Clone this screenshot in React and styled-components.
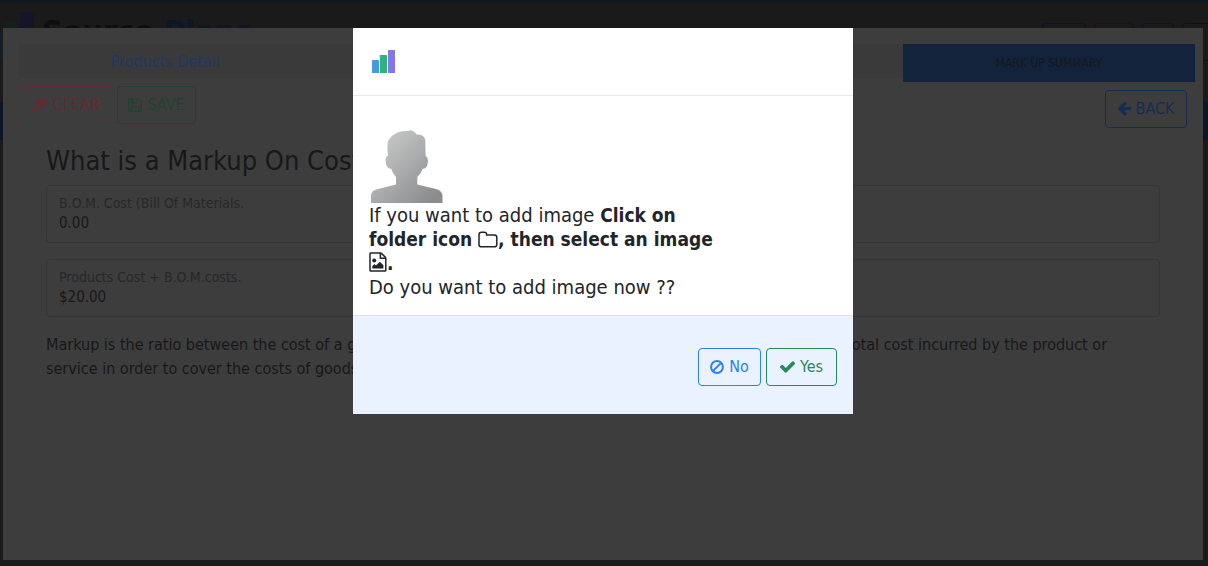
import React from "react";
import styled, { createGlobalStyle, css } from "styled-components";

const font = '"Trebuchet MS", "DejaVu Sans Condensed", "DejaVu Sans", sans-serif';

const GlobalStyle = createGlobalStyle`
  *, *::before, *::after { box-sizing: border-box; }
  body {
    margin: 0;
    background: #1a1a1a;
    color: #17181a;
    font: 16px/24px ${font};
  }
  button, input { font: inherit; }
`;

/* page behind the dialogs */

const Page = styled.div`
  display: flex;
  flex-direction: column;
  min-height: 100vh;
  overflow: hidden;
  border-top: 2px solid #0e161f;
`;

const PageHeader = styled.header`
  display: flex;
  align-items: flex-start;
  justify-content: space-between;
  height: 100px;
`;

const Brand = styled.div`
  display: flex;
  gap: 8px;
  padding-top: 8px;
  font-size: 32px;
  line-height: 44px;
  font-weight: bold;
  color: #0d0e0f;

  svg { flex: none; height: 52px; width: 52px; margin-left: -18px; }
  em { font-style: normal; color: #0b1724; }
`;

const PageActions = styled.div`
  display: flex;
  gap: 8px;
  padding-top: 21px;
  margin-right: -8px;
`;

const GhostButton = styled.button`
  flex: none;
  width: ${(p) => p.$width}px;
  height: 38px;
  border: 1px solid ${(p) => p.$tone};
  border-radius: 4px;
  background: none;
`;

const PageNav = styled.nav`
  height: 38px;
  background: #0c1524;
`;

/* dialog layers */

const Layer = styled.div`
  position: fixed;
  inset: 0;
  display: flex;
`;

const PanelLayer = styled(Layer)`
  padding: 28px 5px 6px 3px;
`;

const DialogLayer = styled(Layer)`
  align-items: flex-start;
  justify-content: center;
  padding: 28px 2px 28px 0;
`;

const Panel = styled.section`
  flex: 1;
  padding: 16px 8px 16px 16px;
  background: #3d3d3d;
  overflow: hidden;
`;

const PanelTop = styled.div`
  display: grid;
  grid-template-columns: 1fr 292px;
`;

const Column = styled.div`
  display: flex;
  flex-direction: column;
  gap: 8px;
`;

const TabStrip = styled.div`
  display: flex;
  height: 34px;
  background: #3a3a3a;
`;

const Tab = styled.a`
  width: 292px;
  line-height: 36px;
  text-align: center;
  text-decoration: none;
  color: #1f3961;
`;

const SummaryTab = styled.button`
  height: 38px;
  padding: 0;
  border: 0;
  background: #12233b;
  color: #17181a;
  font-size: 12px;
  text-transform: uppercase;
`;

const ButtonRow = styled.div`
  display: flex;
  gap: 5px;
  ${(p) => p.$end && css`justify-content: flex-end; padding-right: 8px;`}
`;

const tones = {
  danger: "#642a31",
  save: "#1f4331",
  back: "#162d52",
  primary: "#2b7ff5",
  success: "#28895a",
};

const Button = styled.button`
  display: flex;
  align-items: center;
  justify-content: center;
  gap: 5px;
  width: ${(p) => p.$width}px;
  height: 38px;
  padding: 0;
  border: 1px solid ${(p) => tones[p.$tone]};
  border-radius: 4px;
  background: none;
  color: ${(p) => tones[p.$tone]};
  white-space: nowrap;
  cursor: pointer;

  svg { flex: none; fill: currentColor; }
`;

const Content = styled.div`
  padding: 15px 35px 0 27px;
`;

const Title = styled.h2`
  margin: 0 0 7px;
  font-size: 27px;
  line-height: 35px;
  font-weight: normal;
`;

const Field = styled.label`
  display: flex;
  flex-direction: column;
  height: 58px;
  margin-bottom: 16px;
  padding: 7px 12px;
  border: 1px solid #353535;
  border-radius: 4px;
  color: #272829;
  font-size: 14px;
  line-height: 20px;

  input {
    height: 20px;
    padding: 0;
    border: 0;
    outline: 0;
    background: none;
    color: #17181a;
    font-size: 15px;
  }
`;

const Paragraph = styled.p`
  margin: 0;
`;

const Dialog = styled.section`
  width: 500px;
  max-width: 100%;
  background: #fff;
  color: #212529;
`;

const DialogHeader = styled.header`
  display: flex;
  align-items: center;
  height: 68px;
  padding: 0 16px;
  border-bottom: 1px solid #e7eaed;
`;

const DialogBody = styled.div`
  padding: 32px 16px 16px;
  font-size: 20px;
  line-height: 24px;

  p { max-width: 352px; margin: 0; }
  b { font-size: 19px; }
`;

const Avatar = styled.svg`
  display: block;
  width: 72px;
  height: 75px;
  margin-left: 2px;
`;

const InlineIcon = styled.svg`
  fill: none;
  stroke: currentColor;
  vertical-align: -2px;
`;

const DialogFooter = styled.footer`
  display: flex;
  align-items: flex-start;
  justify-content: flex-end;
  gap: 5px;
  padding: 32px 16px 28px;
  border-top: 1px solid #dee2e6;
  background: #eaf2ff;
`;

const BarsLogo = ({ colors }) => (
  <svg viewBox="0 0 26 26" width="26" height="26">
    <rect x="3" y="11" width="7" height="13" rx="0.6" fill={colors[0]} />
    <rect x="10.8" y="6" width="7.2" height="18" rx="0.6" fill={colors[1]} />
    <rect x="19" y="1" width="7.4" height="23" rx="0.6" fill={colors[2]} />
  </svg>
);

const EraserIcon = () => (
  <svg viewBox="0 256 1920 1280" width="17" height="12">
    <path d="M896 1408l336-384h-768l-336 384h768zm1013-1077q15 34 9.5 71.5t-30.5 65.5l-896 1024q-38 44-96 44h-768q-38 0-69.5-20.5t-47.5-54.5q-15-34-9.5-71.5t30.5-65.5l896-1024q38-44 96-44h768q38 0 69.5 20.5t47.5 54.5z" />
  </svg>
);

const FloppyIcon = () => (
  <svg viewBox="0 128 1536 1536" width="14" height="14">
    <path d="M384 1536h768v-384h-768v384zm896 0h128v-896q0-14-10-38.5t-20-34.5l-281-281q-10-10-34-20t-39-10v416q0 40-28 68t-68 28h-576q-40 0-68-28t-28-68v-416h-128v1280h128v-416q0-40 28-68t68-28h832q40 0 68 28t28 68v416zm-384-928v-320q0-13-9.5-22.5t-22.5-9.5h-192q-13 0-22.5 9.5t-9.5 22.5v320q0 13 9.5 22.5t22.5 9.5h192q13 0 22.5-9.5t9.5-22.5zm640 32v928q0 40-28 68t-68 28h-1344q-40 0-68-28t-28-68v-1344q0-40 28-68t68-28h928q40 0 88 20t76 48l280 280q28 28 48 76t20 88z" />
  </svg>
);

const ArrowLeftIcon = () => (
  <svg viewBox="64 212 1472 1577" width="13" height="14">
    <path d="M1536 896v128q0 53-32.5 90.5t-84.5 37.5h-704l293 294q38 36 38 90t-38 90l-75 76q-37 37-90 37-52 0-91-37l-651-652q-37-37-37-90 0-52 37-91l651-650q38-38 91-38 52 0 90 38l75 74q38 38 38 91t-38 91l-293 293h704q52 0 84.5 37.5t32.5 90.5z" />
  </svg>
);

const CheckIcon = () => (
  <svg viewBox="121 334 1550 1188" width="15" height="12">
    <path d="M1671 566q0 40-28 68l-724 724-136 136q-28 28-68 28t-68-28l-136-136-362-362q-28-28-28-68t28-68l136-136q28-28 68-28t68 28l294 295 656-657q28-28 68-28t68 28l136 136q28 28 28 68z" />
  </svg>
);

const BanIcon = () => (
  <svg viewBox="0 0 14 14" width="14" height="14">
    <g fill="none" stroke="currentColor" strokeWidth="2">
      <circle cx="7" cy="7" r="5.9" />
      <path d="M2.9 11.1 11.1 2.9" />
    </g>
  </svg>
);

const FolderIcon = () => (
  <InlineIcon viewBox="0 0 20 17" width="20" height="17" strokeWidth="1.5" role="img" aria-label="folder">
    <path d="M1 3.6Q1 1.2 3.4 1.2H6.2Q8.6 1.2 8.6 3.4V3.9H16.4Q18.8 3.9 18.8 6.2V13.4Q18.8 15.8 16.4 15.8H3.4Q1 15.8 1 13.4Z" />
  </InlineIcon>
);

const ImageFileIcon = () => (
  <InlineIcon viewBox="0 0 18 20" width="18" height="20" strokeWidth="1.5" role="img" aria-label="image">
    <path d="M1 1.7Q1 .9 1.8 .9H11.4Q12 .9 12.5 1.4L16.2 5.1Q16.8 5.7 16.8 6.4V18.3Q16.8 19.1 16 19.1H1.8Q1 19.1 1 18.3Z" />
    <path d="M11.4 1V6.2H16.6" />
    <circle cx="5.2" cy="8.6" r="2" fill="currentColor" stroke="none" />
    <path d="M3.3 16.6V14.2L5.4 12.1 6.9 13.5 10.8 9.8 14.4 13.3V16.6Z" fill="currentColor" stroke="none" />
  </InlineIcon>
);

const PersonImage = () => (
  <Avatar viewBox="0 -1 72 75" role="img" aria-label="No picture">
    <defs>
      <linearGradient id="person" x1="0" y1="0" x2="1" y2="1">
        <stop offset="0.15" stopColor="#c6c6c6" />
        <stop offset="0.9" stopColor="#8a8c8e" />
      </linearGradient>
    </defs>
    <path
      fill="url(#person)"
      d="M0 74V67Q0 61.5 6 60.2L25 55.5V48Q21.5 44.5 20.3 39.7 16.6 39.8 15.3 36 14 32 14.6 29.5 15.2 27 17 26.7 16 20 16.6 13 19 7.5 23 5.5 27 2.5 31.5 2.3 36 2.6 40.3 1.3 44 2.5 45.5 5.6 51 5.3 53.3 8.500 55 11 54.3 14L54.6 26.7Q56.8 28 57 31.5 57 37 54.5 39 53.5 39.8 51.7 39.700 50 45 46.3 48V55.5L65 60Q71.5 61.5 71.5 67.5V74Z"
    />
  </Avatar>
);

export default function App() {
  return (
    <>
      <GlobalStyle />
      <Page>
        <PageHeader>
          <Brand>
            <BarsLogo colors={["#13202b", "#13211d", "#15142a"]} />
            <span>
              Source <em>Plans</em>
            </span>
          </Brand>
          <PageActions>
            <GhostButton $width={44} $tone="#0d1322" aria-label="Menu" />
            <GhostButton $width={40} $tone="#220f13" aria-label="Alerts" />
            <GhostButton $width={32} $tone="#0d1322" aria-label="Help" />
            <GhostButton $width={34} $tone="#0e0f11" aria-label="Account" />
          </PageActions>
        </PageHeader>
        <PageNav />
      </Page>

      <PanelLayer>
        <Panel>
          <PanelTop>
            <Column>
              <TabStrip>
                <Tab href="#products">Products Detail</Tab>
              </TabStrip>
              <ButtonRow>
                <Button $tone="danger" $width={93}>
                  <EraserIcon />
                  CLEAR
                </Button>
                <Button $tone="save" $width={79}>
                  <FloppyIcon />
                  SAVE
                </Button>
              </ButtonRow>
            </Column>
            <Column>
              <SummaryTab>Mark up summary</SummaryTab>
              <ButtonRow $end>
                <Button $tone="back" $width={82}>
                  <ArrowLeftIcon />
                  BACK
                </Button>
              </ButtonRow>
            </Column>
          </PanelTop>
          <Content>
            <Title>What is a Markup On Cost?</Title>
            <Field>
              B.O.M. Cost (Bill Of Materials.
              <input readOnly value="0.00" />
            </Field>
            <Field>
              Products Cost + B.O.M.costs.
              <input readOnly value="$20.00" />
            </Field>
            <Paragraph>
              Markup is the ratio between the cost of a good or service and its selling price. A markup
              is also added into the total cost incurred by the product or service in order to cover
              the costs of goods sold.
            </Paragraph>
          </Content>
        </Panel>
      </PanelLayer>

      <DialogLayer>
        <Dialog role="dialog" aria-label="Add image">
          <DialogHeader>
            <BarsLogo colors={["#459bdc", "#2cb67d", "#8377ea"]} />
          </DialogHeader>
          <DialogBody>
            <PersonImage />
            <p>
              If you want to add image{" "}
              <b>
                Click on folder icon <FolderIcon />, then select an image <ImageFileIcon />.
              </b>
            </p>
            <p>Do you want to add image now ??</p>
          </DialogBody>
          <DialogFooter>
            <Button $tone="primary" $width={63}>
              <BanIcon />
              No
            </Button>
            <Button $tone="success" $width={71}>
              <CheckIcon />
              Yes
            </Button>
          </DialogFooter>
        </Dialog>
      </DialogLayer>
    </>
  );
}
